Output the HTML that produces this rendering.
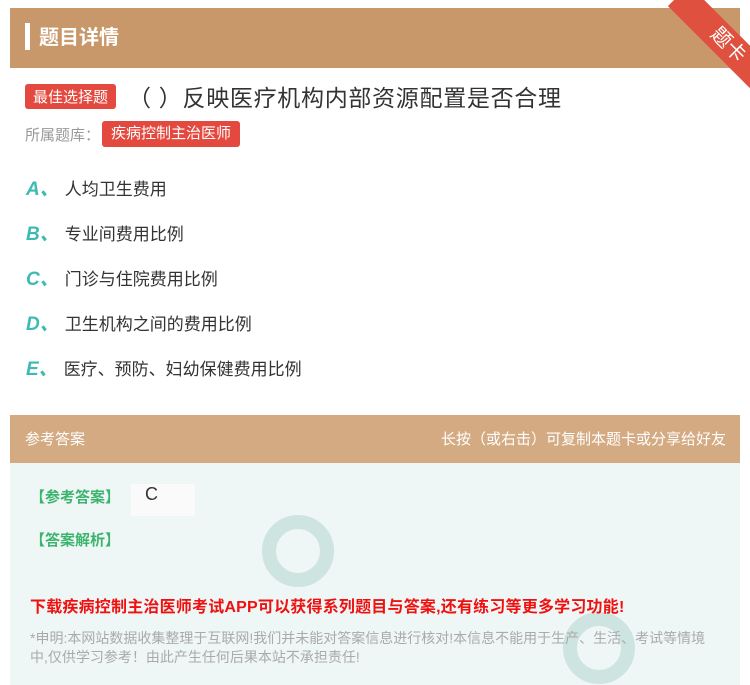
<!DOCTYPE html>
<html><head><meta charset="utf-8"><style>
*{margin:0;padding:0;box-sizing:border-box}
body{width:750px;height:685px;background:#fff;font-family:"Liberation Sans","Noto Sans CJK SC",sans-serif;position:relative;overflow:hidden}
.hd{position:absolute;left:10px;top:8px;width:730px;height:60px;background:#c9986a}
.hd .bar{position:absolute;left:15px;top:15px;width:5px;height:27px;background:#fff}
.hd .t{position:absolute;left:29px;top:13px;color:#fff;font-size:20px;font-weight:bold}
.rib{position:absolute;right:0;top:0;width:100px;height:100px;overflow:hidden}
.rib div{position:absolute;left:8px;top:30px;width:140px;height:30px;background:#e0503f;transform:rotate(45deg);color:#fff;font-size:20px;text-align:center;line-height:30px}
.tag{display:inline-block;background:#e4493f;color:#fff;border-radius:3px}
.q{position:absolute;left:25px;top:79px;font-size:23px;color:#333;display:flex;align-items:center;letter-spacing:0.7px}
.q .tag{font-size:15px;padding:2px 8px;margin-right:12px;letter-spacing:0}
.lib{position:absolute;left:25px;top:121px;font-size:15px;color:#999;display:flex;align-items:center}
.lib .tag{font-size:15px;padding:1px 9px 4px;margin-left:2px}
.op{position:absolute;left:26px;font-size:17px;color:#333}
.op b{color:#3dbab2;font-style:italic;font-size:19px;margin-right:6px}
.ah{position:absolute;left:10px;top:415px;width:730px;height:48px;background:#d4aa82;color:#fff;font-size:15px}
.ah .l{position:absolute;left:15px;top:13px}.ah .r{position:absolute;right:14px;top:13px}
.ab{position:absolute;left:10px;top:463px;width:730px;height:222px;background:#eef7f5}
.g{position:absolute;color:#3cb46e;font-size:15px;font-weight:bold}
.red{position:absolute;left:30px;top:593px;color:#f01010;font-size:16px;font-weight:bold;letter-spacing:0.2px}
.note{position:absolute;left:30px;top:629px;width:690px;color:#aaa;font-size:14px;line-height:19px}
.ring{position:absolute;border-radius:50%;border:14px solid #b5d6ce;opacity:.55}
</style></head><body>
<div class="hd"><div class="bar"></div><div class="t">题目详情</div></div>
<div class="rib"><div>题卡</div></div>
<div class="q"><span class="tag">最佳选择题</span>（ ）反映医疗机构内部资源配置是否合理</div>
<div class="lib">所属题库：<span class="tag">疾病控制主治医师</span></div>
<div class="op" style="top:174px"><b>A、</b>人均卫生费用</div>
<div class="op" style="top:219px"><b>B、</b>专业间费用比例</div>
<div class="op" style="top:264px"><b>C、</b>门诊与住院费用比例</div>
<div class="op" style="top:309px"><b>D、</b>卫生机构之间的费用比例</div>
<div class="op" style="top:354px"><b>E、</b>医疗、预防、妇幼保健费用比例</div>
<div class="ah"><span class="l">参考答案</span><span class="r">长按（或右击）可复制本题卡或分享给好友</span></div>
<div class="ab"></div>
<div class="ring" style="left:262px;top:515px;width:72px;height:72px"></div>
<div class="ring" style="left:563px;top:612px;width:72px;height:72px"></div>
<div class="g" style="left:30px;top:486px">【参考答案】</div>
<div style="position:absolute;left:131px;top:484px;width:64px;height:32px;background:#fafafa;font-size:18px;color:#333;padding-left:14px">C</div>
<div class="g" style="left:30px;top:529px">【答案解析】</div>
<div class="red">下载疾病控制主治医师考试APP可以获得系列题目与答案,还有练习等更多学习功能!</div>
<div class="note">*申明:本网站数据收集整理于互联网!我们并未能对答案信息进行核对!本信息不能用于生产、生活、考试等情境中,仅供学习参考！由此产生任何后果本站不承担责任!</div>
</body></html>
